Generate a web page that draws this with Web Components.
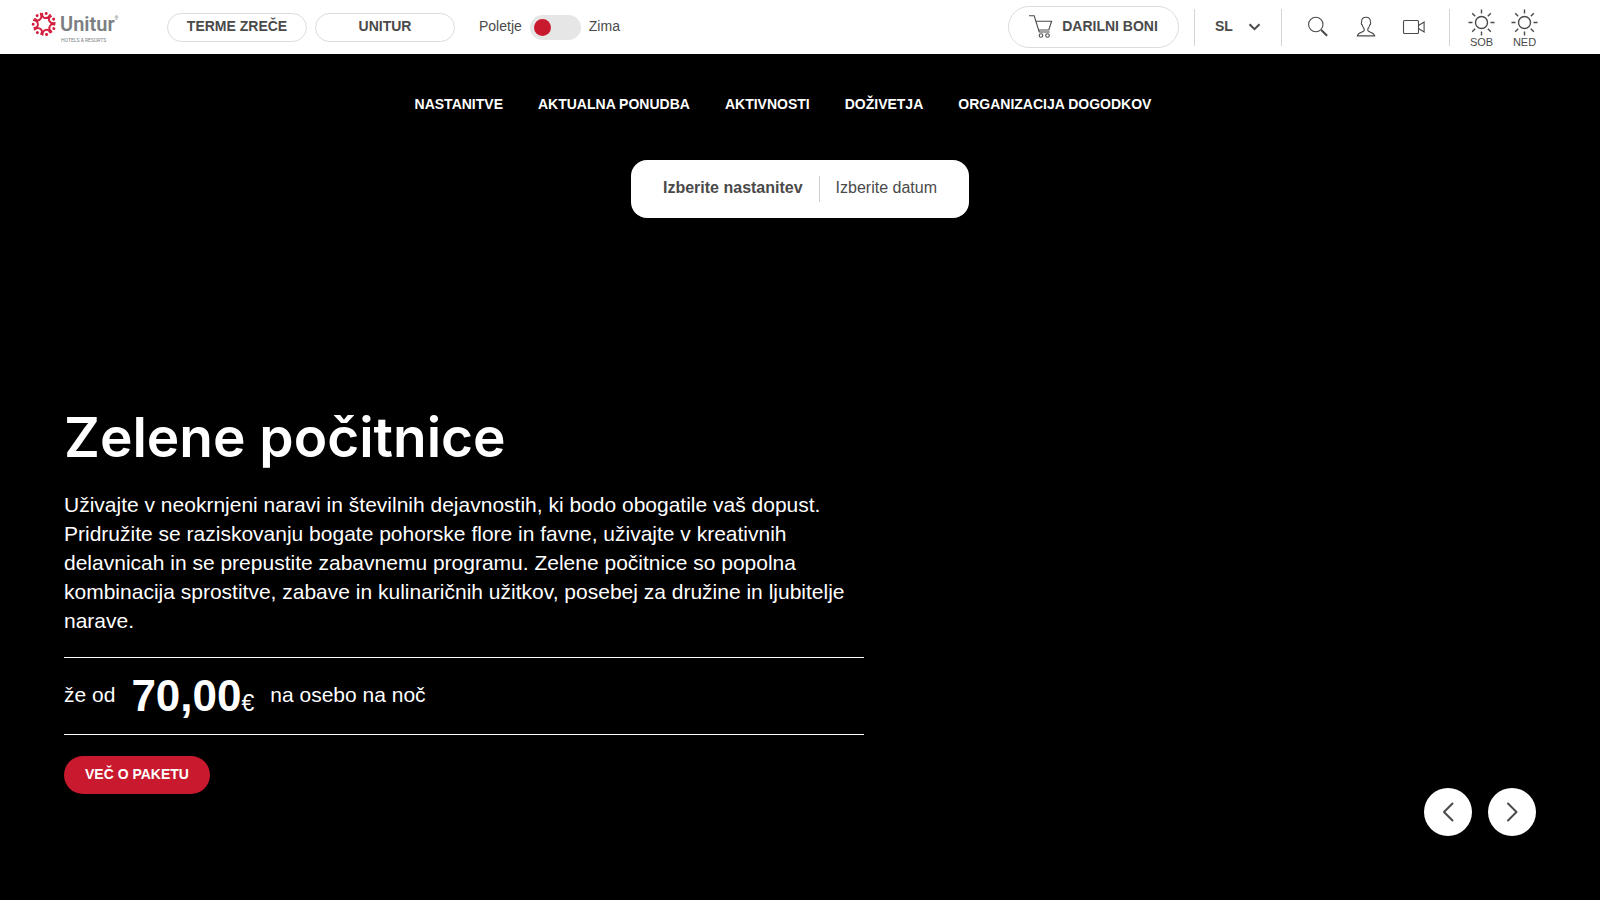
<!DOCTYPE html>
<html lang="sl">
<head>
<meta charset="utf-8">
<title>Unitur – Zelene počitnice</title>
<style>
  html, body { margin: 0; background: #000; }
  body { font-family: "Liberation Sans", Arial, sans-serif; font-size: 14px; color: #4a4a4a; }
</style>
</head>
<body>
<unitur-page></unitur-page>
<script>
const define = (name, html) => customElements.define(name, class extends HTMLElement {
  constructor() {
    super();
    const t = document.createElement('template');
    t.innerHTML = html;
    this.attachShadow({ mode: 'open' }).append(t.content.cloneNode(true));
  }
});

const petals = Array.from({ length: 7 }, (_, i) =>
  `<g transform="rotate(${14 + i * 360 / 7})"><path d="M-4.200-9.600C-3.600-4.800 2.400-4.800 3.600-10.200"/><circle cx="-.4" cy="-10.800" r="1.500"/></g>`).join('');

define('unitur-logo', `
<style>
  :host { display: block; }
  a { display: flex; align-items: flex-start; gap: 3px; color: #7b7f83; text-decoration: none; font-family: Roboto, sans-serif; }
  svg { width: 26px; height: 26px; }
  .petals { fill: none; stroke: #d31f3d; stroke-width: 1.9; stroke-linecap: round; }
  .petals circle { fill: #d31f3d; stroke: none; }
  .name { display: flex; font-size: 20px; line-height: 27px; font-weight: 600; }
  sup { font-size: 5px; line-height: 14px; font-weight: 400; }
  .tag { font-size: 5px; line-height: 5px; color: #7b7f83; padding-left: 1px; }
</style>
<a href="#">
  <svg viewBox="-13 -13 26 26" aria-hidden="true"><g class="petals">${petals}</g></svg>
  <span><span class="name">Unitur<sup>®</sup></span><div class="tag">HOTELS &amp; RESORTS</div></span>
</a>`);

define('pill-link', `
<style>
  :host { display: block; }
  a { box-sizing: border-box; display: flex; align-items: center; justify-content: center; gap: 7px;
      width: var(--pill-width, 140px); height: var(--pill-height, 29px); padding-bottom: var(--pill-lift, 4px); border: 1px solid #dcdcdc; border-radius: 24px;
      color: #4a4a4a; font-weight: 700; font-size: 14px; text-decoration: none; white-space: nowrap; }
</style>
<a href="#"><slot name="icon"></slot><slot></slot></a>`);

define('season-switch', `
<style>
  :host { display: flex; align-items: center; }
  label { display: flex; align-items: center; gap: 8px; line-height: 20px; }
  span { padding-bottom: 2px; }
  input { appearance: none; margin: 0; width: 51px; height: 25px; padding: 4px; border-radius: 13px; background: #e6e6e6; display: flex; box-sizing: border-box; }
  input::before { content: ""; width: 17px; height: 17px; border-radius: 50%; background: #c8192e; }
  input:checked { justify-content: flex-end; }
</style>
<label><span>Poletje</span><input type="checkbox" role="switch"><span>Zima</span></label>`);

define('language-select', `
<style>
  :host { display: grid; align-items: center; width: 46px; }
  select, svg { grid-area: 1 / 1; }
  select { appearance: none; border: 0; margin: 0; padding: 0 0 2px; background: none; width: 100%; font: 700 14px "Liberation Sans", Arial, sans-serif; color: #4a4a4a; }
  svg { justify-self: end; width: 13px; height: 8px; pointer-events: none; fill: none; stroke: #4a4a4a; stroke-width: 2; }
</style>
<select aria-label="Jezik"><option>SL</option><option>EN</option><option>DE</option></select>
<svg viewBox="0 0 13 8"><path d="M1.5 1.2l5 5 5-5"/></svg>`);

define('icon-button', `
<style>
  :host { display: block; }
  button { display: grid; place-items: center; width: 24px; height: 24px; padding: 0; border: 0; background: none; color: #4a4a4a; }
</style>
<button type="button"><slot></slot></button>`);

define('weather-day', `
<style>
  :host { display: flex; flex-direction: column; align-items: center; width: 27px; padding-top: 3px; font-size: 11px; line-height: 13px; }
  svg { width: 27px; height: 27px; fill: none; stroke: #4a4a4a; stroke-width: 1.4; }
</style>
<svg viewBox="-13.5 -13.5 27 27" aria-hidden="true"><circle r="6"/><path d="M0-13v4M0 13V9M-13 0h4M13 0H9M-9.3-9.3l3 3M9.3-9.3l-3 3M-9.3 9.3l3-3M9.3 9.3l-3-3"/></svg>
<slot></slot>`);

define('top-bar', `
<style>
  :host { display: flex; align-items: center; box-sizing: border-box; height: 54px; padding: 0 62px 0 31px; background: #fff; }
  unitur-logo { width: 136px; }
  .brands { display: flex; gap: 8px; margin-right: 24px; padding-top: 1px; }
  .tools { display: flex; align-items: center; margin-left: auto; }
  .rule { width: 1px; height: 37px; background: #d5d5d5; }
  .gift { --pill-width: 171px; --pill-height: 42px; --pill-lift: 2px; margin-right: 15px; }
  language-select { margin: 0 20px; }
  .icons { display: flex; gap: 24px; margin: 0 23px 0 24px; }
  .weather { display: flex; gap: 16px; margin-left: 18px; }
  svg { display: block; fill: none; stroke: #4a4a4a; stroke-width: 1.1; }
</style>
<unitur-logo></unitur-logo>
<div class="brands"><pill-link>TERME ZREČE</pill-link><pill-link>UNITUR</pill-link></div>
<season-switch></season-switch>
<div class="tools">
  <pill-link class="gift"><svg slot="icon" width="26" height="24" viewBox="0 0 26 24"><path d="M0 1.800h5.200l5 16.200h10.400M6.800 7.200h15.800l-2.800 8.800H9.500"/><circle cx="12" cy="21.500" r="1.800"/><circle cx="18.500" cy="21.500" r="1.800"/></svg>DARILNI BONI</pill-link>
  <span class="rule"></span>
  <language-select></language-select>
  <span class="rule"></span>
  <div class="icons">
    <icon-button><svg width="24" height="24" viewBox="0 0 24 24" role="img" aria-label="Iskanje"><circle cx="9.800" cy="9.500" r="7.200"/><path d="M15 14.800l1 1" /><path stroke-width="2" d="M15.500 15.200l5.600 5.600"/></svg></icon-button>
    <icon-button><svg width="24" height="24" viewBox="0 0 24 24" role="img" aria-label="Prijava"><path d="M10.200 14C8.800 12.500 8.600 11.500 8.300 10C7 9.500 7.200 7.800 7.600 7C7.300 4 9.200 2.200 12 2.200S16.700 4 16.400 7c.4.8.6 2.500-.7 3c-.3 1.500-.5 2.500-1.900 4v1.600c1 1.900 6.400 1.600 6.900 5.300H3.300c.5-3.700 5.900-3.400 6.900-5.300z"/></svg></icon-button>
    <icon-button><svg width="24" height="24" viewBox="0 0 24 24" role="img" aria-label="Spletna kamera"><rect x="1.500" y="5.500" width="15" height="13" rx="1"/><path d="M16.500 10.500l5.600-3.500v10l-5.600-3.500"/></svg></icon-button>
  </div>
  <span class="rule"></span>
  <div class="weather"><weather-day>SOB</weather-day><weather-day>NED</weather-day></div>
</div>`);

define('main-nav', `
<style>
  :host { display: block; }
  nav { display: flex; justify-content: center; gap: 35px; padding-right: 34px; }
  a { color: #fff; font-weight: 700; font-size: 14px; line-height: 20px; text-decoration: none; white-space: nowrap; }
</style>
<nav><a href="#">NASTANITVE</a><a href="#">AKTUALNA PONUDBA</a><a href="#">AKTIVNOSTI</a><a href="#">DOŽIVETJA</a><a href="#">ORGANIZACIJA DOGODKOV</a></nav>`);

define('booking-bar', `
<style>
  :host { display: flex; align-items: center; gap: 16px; padding: 16px 32px; border-radius: 16px; background: #fff; }
  button { border: 0; padding: 0 0 2px; background: none; color: #4a4a4a; font: 16px/22px "Liberation Sans", Arial, sans-serif; }
  .stay { font-weight: 700; }
  .rule { width: 1px; height: 26px; background: #ccc; }
</style>
<button type="button" class="stay">Izberite nastanitev</button><span class="rule"></span><button type="button">Izberite datum</button>`);

define('offer-slide', `
<style>
  :host { display: block; color: #fff; }
  h1 { margin: 0; font: 600 55px/72px Inter, sans-serif; white-space: nowrap; }
  p { margin: 17px 0 22px; font-size: 21px; line-height: 29px; }
  .price { display: flex; align-items: center; box-sizing: border-box; height: 78px; border: solid #fff; border-width: 1px 0; font-size: 21px; gap: 16px; }
  .price > :not(.sum) { padding-bottom: 2px; }
  b { font-size: 44px; }
  .sum { font-size: 23px; }
  a { display: inline-flex; align-items: center; box-sizing: border-box; height: 38px; margin-top: 21px; padding: 0 21px 2px; border-radius: 19px;
      background: #c8192e; color: #fff; font-weight: 700; font-size: 14px; text-decoration: none; vertical-align: top; }
</style>
<h1><slot name="title"></slot></h1>
<p><slot></slot></p>
<div class="price"><span>že od</span><span class="sum"><b>70,00</b>€</span><span>na osebo na noč</span></div>
<a href="#">VEČ O PAKETU</a>`);

define('slide-arrows', `
<style>
  :host { display: flex; gap: 16px; }
  button { display: grid; place-items: center; width: 48px; height: 48px; padding: 0; border: 0; border-radius: 50%; background: #fff; }
  svg { fill: none; stroke: #4a4a4a; stroke-width: 2; stroke-linecap: round; stroke-linejoin: round; }
</style>
<button type="button" aria-label="Nazaj"><svg width="20" height="20" viewBox="0 0 20 20"><path d="M14.500 1.500L6 10l8.500 8.500"/></svg></button>
<button type="button" aria-label="Naprej"><svg width="20" height="20" viewBox="0 0 20 20"><path d="M6 1.500l8.500 8.500L6 18.500"/></svg></button>`);

define('unitur-page', `
<style>
  :host { display: flex; flex-direction: column; min-height: 100vh; }
  main { flex: 1; display: flex; flex-direction: column; padding: 40px 64px 64px; }
  booking-bar { align-self: center; margin: 46px 0; }
  .slide { display: flex; align-items: flex-end; justify-content: space-between; margin-top: auto; }
  offer-slide { padding-bottom: 42px; flex: 0 1 800px; }
</style>
<top-bar></top-bar>
<main>
  <main-nav></main-nav>
  <booking-bar></booking-bar>
  <div class="slide">
    <offer-slide><span slot="title">Zelene počitnice</span>Uživajte v neokrnjeni naravi in številnih dejavnostih, ki bodo obogatile vaš dopust. Pridružite se raziskovanju bogate pohorske flore in favne, uživajte v kreativnih delavnicah in se prepustite zabavnemu programu. Zelene počitnice so popolna kombinacija sprostitve, zabave in kulinaričnih užitkov, posebej za družine in ljubitelje narave.</offer-slide>
    <slide-arrows></slide-arrows>
  </div>
</main>`);
</script>
</body>
</html>
